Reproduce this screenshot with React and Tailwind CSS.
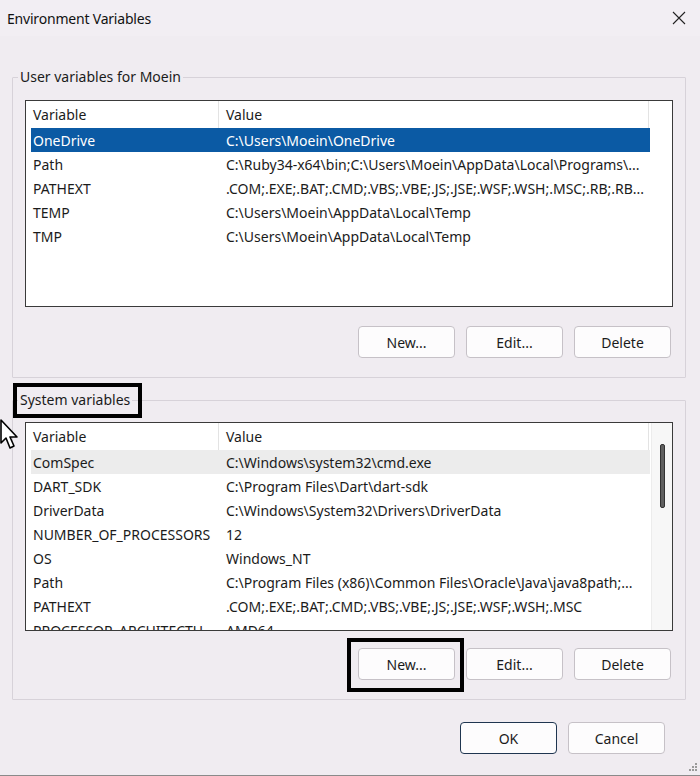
import React from "react";

const userVars = [
  ["OneDrive", "C:\\Users\\Moein\\OneDrive"],
  ["Path", "C:\\Ruby34-x64\\bin;C:\\Users\\Moein\\AppData\\Local\\Programs\\..."],
  ["PATHEXT", ".COM;.EXE;.BAT;.CMD;.VBS;.VBE;.JS;.JSE;.WSF;.WSH;.MSC;.RB;.RB..."],
  ["TEMP", "C:\\Users\\Moein\\AppData\\Local\\Temp"],
  ["TMP", "C:\\Users\\Moein\\AppData\\Local\\Temp"],
];

const systemVars = [
  ["ComSpec", "C:\\Windows\\system32\\cmd.exe"],
  ["DART_SDK", "C:\\Program Files\\Dart\\dart-sdk"],
  ["DriverData", "C:\\Windows\\System32\\Drivers\\DriverData"],
  ["NUMBER_OF_PROCESSORS", "12"],
  ["OS", "Windows_NT"],
  ["Path", "C:\\Program Files (x86)\\Common Files\\Oracle\\Java\\java8path;..."],
  ["PATHEXT", ".COM;.EXE;.BAT;.CMD;.VBS;.VBE;.JS;.JSE;.WSF;.WSH;.MSC"],
  ["PROCESSOR_ARCHITECTU...", "AMD64"],
];

function WinButton({ children, primary }) {
  return (
    <button
      className={
        "w-[97px] h-[32px] rounded-[4px] bg-[#fdfcfd] text-[14px] text-[#1b1b1b] " +
        (primary ? "border border-[#1f3550]" : "border border-[#c6c1c7]")
      }
    >
      {children}
    </button>
  );
}

function ListView({ rows, height, selected, hover, scrollbar }) {
  return (
    <div className={"relative bg-white border border-[#3a3a3a] overflow-hidden " + height}>
      <div className="flex h-[27px] items-center px-[5px] text-[14px] text-[#1b1b1b]">
        <div className="w-[188px] pl-[2px] h-full flex items-center border-r border-[#e3e3e3]">Variable</div>
        <div className="w-[430px] pl-[7px] h-full flex items-center border-r border-[#e3e3e3]">Value</div>
      </div>
      {rows.map(([name, value], i) => {
        let cls = "text-[#1b1b1b]";
        if (i === selected) cls = "bg-[#0b5aa4] text-white";
        else if (i === hover) cls = "bg-[#ececec] text-[#1b1b1b]";
        return (
          <div key={i} className={"flex h-[24px] items-center ml-[5px] w-[619px] text-[14px] whitespace-nowrap " + cls}>
            <div className="w-[188px] pl-[2px] overflow-hidden text-ellipsis">{name}</div>
            <div className="w-[430px] pl-[7px] overflow-hidden text-ellipsis">{value}</div>
          </div>
        );
      })}
      {scrollbar && (
        <div className="absolute top-0 right-0 bottom-0 w-[21px] bg-[#f7f7f7] border-l border-[#ececec]">
          <div className="mx-auto mt-[21px] w-[5px] h-[64px] rounded-[2px] bg-[#606060] border border-[#333]" />
        </div>
      )}
    </div>
  );
}

function Group({ title, children, className }) {
  return (
    <fieldset className={"border border-[#d7d2d9] rounded-[1px] px-[12px] " + className}>
      <legend className="ml-[-7px] px-[2px] h-[20px] leading-[20px] text-[14px] text-[#1b1b1b]">{title}</legend>
      {children}
    </fieldset>
  );
}

export default function App() {
  return (
    <div
      className="relative w-[700px] h-[776px] bg-[#f0ecf1] overflow-hidden border-b border-[#8a8a8a]"
      style={{ fontFamily: '"Noto Sans", "Open Sans", sans-serif' }}
    >
      {/* title bar */}
      <div className="h-[36px] flex items-center justify-between pl-[7px] pr-[14px] bg-[#f2eef3]">
        <span className="text-[14px] text-[#111] tracking-[-0.2px]">Environment Variables</span>
        <svg width="14" height="14" viewBox="0 0 14 14">
          <path d="M1 1 L13 13 M13 1 L1 13" stroke="#222" strokeWidth="1.1" />
        </svg>
      </div>

      <div className="px-[12px] pt-[31px] w-[698px]">
        <Group title="User variables for Moein" className="pt-[13px] pb-[19px]">
          <ListView rows={userVars} height="h-[207px]" selected={0} />
          <div className="flex justify-end gap-[11px] mt-[19px] pr-[2px]">
            <WinButton>New...</WinButton>
            <WinButton>Edit...</WinButton>
            <WinButton>Delete</WinButton>
          </div>
        </Group>

        <Group title="System variables" className="mt-[12px] pt-[12px] pb-[19px]">
          <ListView rows={systemVars} height="h-[209px]" hover={0} scrollbar />
          <div className="flex justify-end gap-[11px] mt-[17px] pr-[2px]">
            <WinButton>New...</WinButton>
            <WinButton>Edit...</WinButton>
            <WinButton>Delete</WinButton>
          </div>
        </Group>

        <div className="flex justify-end gap-[11px] mt-[22px] pr-[21px]">
          <WinButton primary>OK</WinButton>
          <WinButton>Cancel</WinButton>
        </div>
      </div>

      {/* annotation boxes */}
      <div className="absolute left-[13px] top-[383px] w-[129px] h-[35px] border-[4px] border-black" />
      <div className="absolute left-[347px] top-[638px] w-[117px] h-[54px] border-[4px] border-black" />

      {/* mouse cursor */}
      <svg className="absolute left-[-4px] top-[419px]" width="24" height="34" viewBox="0 0 24 34">
        <path d="M5 1 L5 24 L10 19 L14 29 L18 27 L14 18 L21 18 Z" fill="white" stroke="black" strokeWidth="1.6" strokeLinejoin="round" />
      </svg>

      {/* resize grip */}
      <svg className="absolute right-[2px] bottom-[3px]" width="10" height="10" viewBox="0 0 10 10">
        <g fill="#9a9a9a">
          <rect x="7" y="1" width="2" height="2" />
          <rect x="4" y="4" width="2" height="2" />
          <rect x="7" y="4" width="2" height="2" />
          <rect x="1" y="7" width="2" height="2" />
          <rect x="4" y="7" width="2" height="2" />
          <rect x="7" y="7" width="2" height="2" />
        </g>
      </svg>
    </div>
  );
}
